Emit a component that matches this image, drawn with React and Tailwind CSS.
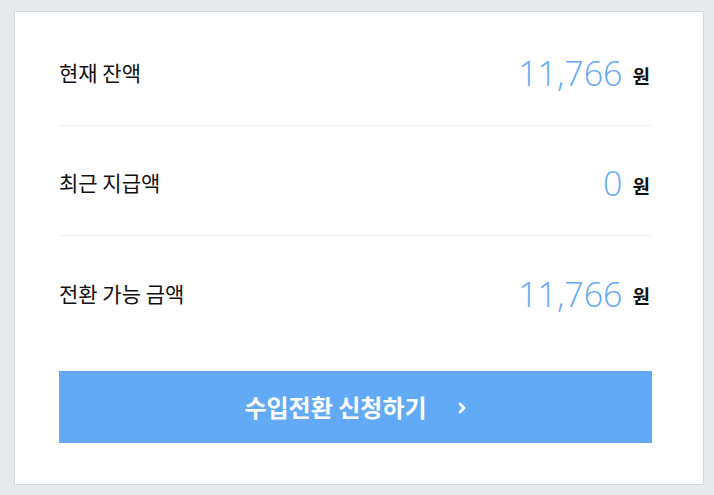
import React from "react";

const rows = [
  { label: "현재 잔액", amount: "11,766" },
  { label: "최근 지급액", amount: "0" },
  { label: "전환 가능 금액", amount: "11,766" },
];

const BalanceRow = ({ label, amount, last }) => (
  <div
    className={`flex h-[110px] items-center justify-between pt-[5px] ${
      last ? "" : "border-b border-[#eef0f2]"
    }`}
  >
    <span className="text-[21px] text-[#111]">{label}</span>
    <div className="flex items-center">
      <span
        className="text-[34px] font-light leading-none text-[#64a9f5]"
        style={{ fontFamily: '"Open Sans", sans-serif' }}
      >
        {amount}
      </span>
      <span className="ml-[10px] mr-[2px] mt-[6px] text-[19px] font-bold text-[#111]">
        원
      </span>
    </div>
  </div>
);

const App = () => {
  return (
    <div
      className="min-h-screen bg-[#e6eaed] pl-[14px] pt-[11px]"
      style={{ fontFamily: '"Noto Sans CJK KR", "Noto Sans", sans-serif' }}
    >
      <div className="w-[690px] border border-[#d6dadd] bg-white pb-[41px] pl-[44px] pr-[51px] pt-[4px]">
        {rows.map((row, i) => (
          <BalanceRow key={row.label} {...row} last={i === rows.length - 1} />
        ))}

        {/* Conversion request button */}
        <button
          type="button"
          className="mt-[25px] flex h-[72px] w-full items-center justify-center bg-[#62aaf5] text-white"
        >
          <span className="text-[24px] font-bold">수입전환 신청하기</span>
          <svg
            width="10"
            height="12"
            viewBox="0 0 10 12"
            className="ml-[30px] mt-[2px]"
            fill="none"
          >
            <path
              d="M3 2l4 4-4 4"
              stroke="white"
              strokeWidth="2.6"
              strokeLinecap="round"
              strokeLinejoin="round"
            />
          </svg>
        </button>
      </div>
    </div>
  );
};

export default App;
